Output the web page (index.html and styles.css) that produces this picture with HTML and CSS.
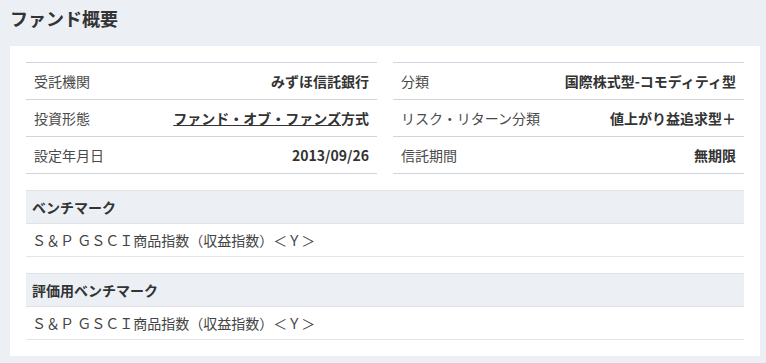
FILE: index.html
```html
<!DOCTYPE html>
<html lang="ja">
<head>
    <meta charset="UTF-8">
    <meta name="viewport" content="width=device-width, initial-scale=1.0">
    <title>ファンド概要</title>
    <link rel="stylesheet" href="styles.css">
</head>
<body>
    <h1 class="page-title">ファンド概要</h1>

    <section class="card">
        <div class="overview">
            <table class="info-table">
                <tr>
                    <th>受託機関</th>
                    <td>みずほ信託銀行</td>
                </tr>
                <tr>
                    <th>投資形態</th>
                    <td><a href="#">ファンド・オブ・ファンズ</a>方式</td>
                </tr>
                <tr>
                    <th>設定年月日</th>
                    <td>2013/09/26</td>
                </tr>
            </table>
            <table class="info-table">
                <tr>
                    <th>分類</th>
                    <td>国際株式型-コモディティ型</td>
                </tr>
                <tr>
                    <th>リスク・リターン分類</th>
                    <td>値上がり益追求型＋</td>
                </tr>
                <tr>
                    <th>信託期間</th>
                    <td>無期限</td>
                </tr>
            </table>
        </div>

        <dl class="bench">
            <dt>ベンチマーク</dt>
            <dd>Ｓ＆Ｐ ＧＳＣＩ商品指数（収益指数）＜Ｙ＞</dd>
        </dl>

        <dl class="bench">
            <dt>評価用ベンチマーク</dt>
            <dd>Ｓ＆Ｐ ＧＳＣＩ商品指数（収益指数）＜Ｙ＞</dd>
        </dl>
    </section>
</body>
</html>
```

FILE: styles.css
```css
body {
    margin: 0;
    background-color: #eceff3;
    font-family: 'Noto Sans CJK JP', 'Noto Sans', sans-serif;
    color: #333;
}

.page-title {
    margin: 0;
    padding: 4px 10px 0;
    height: 42px;
    font-size: 18px;
    font-weight: bold;
    line-height: 28px;
    color: #333;
}

.card {
    background-color: #fff;
    margin: 0 6px 0 10px;
    padding: 16px;
}

/* 上段：左右2列の情報テーブル */
.overview {
    display: grid;
    grid-template-columns: 1fr 1fr;
    gap: 16px;
}

.info-table {
    width: 100%;
    border-collapse: collapse;
    border-top: 1px solid #cdd5e1;
    font-size: 14px;
}

.info-table th,
.info-table td {
    height: 36px;
    padding: 0 8px;
    border-bottom: 1px solid #cdd5e1;
    line-height: 20px;
}

.info-table th {
    text-align: left;
    font-weight: normal;
    color: #4a4a4a;
    white-space: nowrap;
}

.info-table td {
    text-align: right;
    font-weight: bold;
    color: #333;
}

.info-table a {
    color: #333;
    text-decoration: underline;
}

/* 下段：ベンチマーク */
.bench {
    margin: 16px 0 0;
    font-size: 14px;
}

.bench dt {
    height: 32px;
    line-height: 32px;
    padding: 0 6px;
    background-color: #eceff3;
    border-top: 1px solid #dfe3e8;
    border-bottom: 1px solid #dfe3e8;
    font-weight: bold;
    color: #333;
}

.bench dd {
    margin: 0;
    height: 32px;
    line-height: 32px;
    padding: 0 6px;
    border-bottom: 1px solid #e2e5e9;
    color: #444;
}
```
